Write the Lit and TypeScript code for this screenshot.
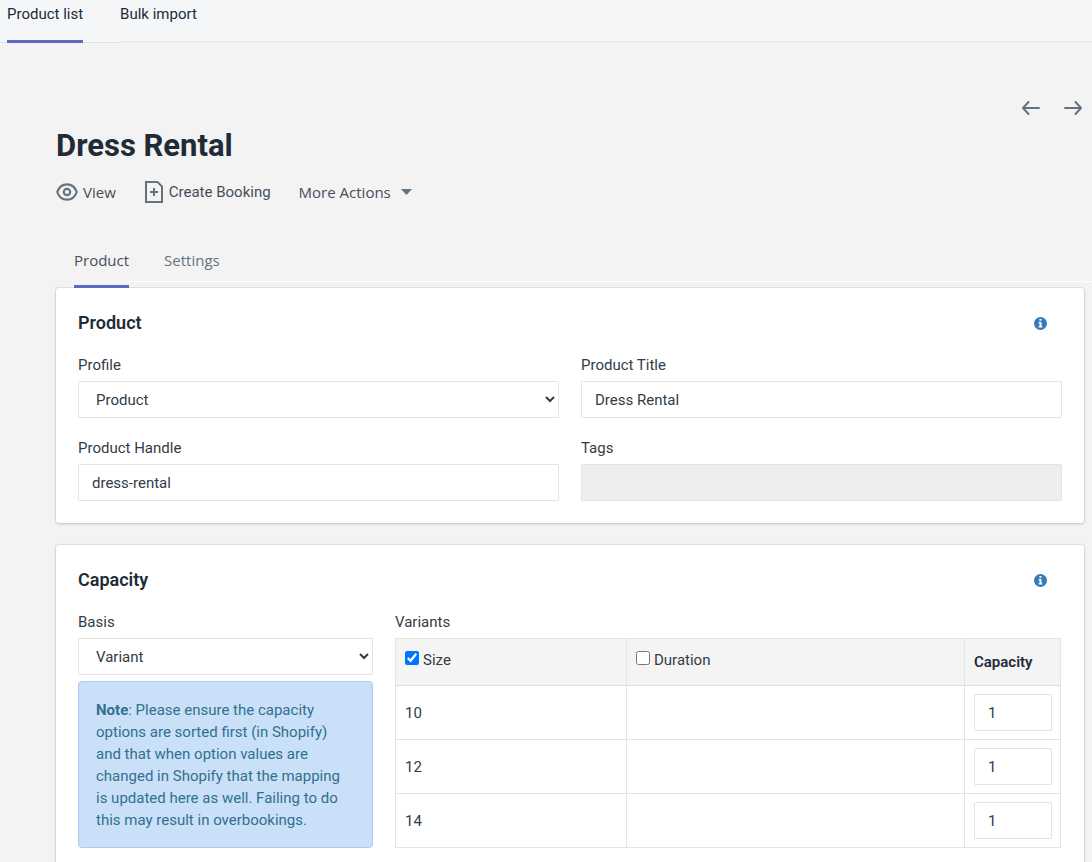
import { LitElement, html, css, svg } from "lit";
import { customElement, property, state } from "lit/decorators.js";

@customElement("info-link")
class InfoLink extends LitElement {
  @property() topic = "";

  static styles = css`
    :host { display: block; }
    .link { display: block; width: 13px; height: 13px; color: #337ab7; }
    .icon { display: block; width: 13px; height: 13px; }
  `;

  render() {
    return html`<a class="link" href="#help" aria-label="About ${this.topic}">
      <svg class="icon" viewBox="0 0 13 13" aria-hidden="true">
        <circle cx="6.5" cy="6.5" r="6.5" fill="currentColor" />
        <path fill="#fff" d="M5.4 2.1h2.1v1.7H5.4zM4.6 5h2.9v4.3h.9v1.3H4.6V9.3h.9V6.2h-.9z" />
      </svg>
    </a>`;
  }
}

@customElement("app-root")
class AppRoot extends LitElement {
  @state() private variants = [
    { size: "10", capacity: 1 },
    { size: "12", capacity: 1 },
    { size: "14", capacity: 1 },
  ];

  static styles = css`
    :host {
      display: block;
      min-height: 100vh;
      background: #f3f3f3;
      color: #212b36;
      font: 15px/22px Roboto, "Liberation Sans", sans-serif;
    }
    * { box-sizing: border-box; }
    a { color: inherit; text-decoration: none; }
    button { border: 0; background: none; padding: 0; color: inherit; font: inherit; }

    .topnav {
      display: flex;
      height: 42px;
      background: #f4f6f8;
      box-shadow: inset 0 -1px #dfe3e8;
    }
    .topnav a { display: block; height: 42px; padding-top: 3px; }
    .nav-current {
      height: 43px;
      padding: 0 37px 0 7px;
      background: #f4f6f8;
      box-shadow: inset 0 -1px #dfe3e8;
    }
    .topnav .active { height: 43px; }
    .active { border-bottom: 3px solid #5c6ac4; }

    .page { padding: 55px 8px 22px 56px; }
    .pager { display: flex; justify-content: flex-end; gap: 20px; }
    .pager svg, .pager button { display: block; width: 22px; height: 22px; }
    .title { margin: 9px 0 0; font-size: 31px; line-height: 36px; font-weight: 700; }

    .actions {
      display: flex;
      align-items: center;
      gap: 28px;
      margin-top: 16px;
      height: 24px;
      color: #454f5b;
    }
    .action { display: flex; align-items: center; gap: 5px; }
    .action svg { display: block; }
    .more { gap: 10px; }
    .alt { font-family: "Open Sans", "Noto Sans", sans-serif; }
    .pager, .action svg { color: #637381; }

    .tabs {
      display: flex;
      height: 39px;
      margin: 39px -8px 0 0;
      padding-left: 18px;
    }
    .tabs a { display: block; padding-top: 6px; color: #637381; }
    .tabs .active { position: relative; height: 45px; color: #454f5b; }
    .tabs-rest { flex: 1; padding-left: 35px; border-bottom: 1px solid #fff; }

    .card {
      margin-top: 22px;
      padding: 22px;
      border-radius: 3px;
      background: #fff;
      box-shadow: 0 0 0 1px rgba(63, 63, 68, 0.08), 0 1px 3px rgba(63, 63, 68, 0.2);
    }
    .tabs + .card { margin-top: 6px; }
    .card-head {
      display: flex;
      align-items: center;
      justify-content: space-between;
      padding-right: 15px;
      margin-bottom: 18px;
    }
    .card-head h2 { margin: 0; font-size: 18px; line-height: 26px; font-weight: 600; }

    .fields { display: grid; grid-template-columns: 1fr 1fr; gap: 19px 22px; }
    .capacity { display: grid; grid-template-columns: 295fr 667fr; gap: 22px; align-items: start; }
    .label { display: block; margin-bottom: 5px; color: #323c47; }
    .control {
      display: block;
      width: 100%;
      height: 37px;
      padding: 0 13px;
      border: 1px solid #e3e4e6;
      border-radius: 1px;
      background: #fff;
      color: #323c47;
      font: inherit;
    }
    .control:disabled { background: #eee; }
    select.control { padding: 0 2px 0 13px; }

    .note {
      margin: 6px 0 0;
      padding: 17px 22px 16px 17px;
      border: 1px solid #a4cdf4;
      border-radius: 4px;
      background: #c9e0f8;
      color: #31708f;
    }

    .variants { width: calc(100% - 1px); table-layout: fixed; border-collapse: collapse; color: #323c47; }
    .variants th, .variants td { border: 1px solid #e3e4e6; text-align: left; padding: 8px 8px 8px 9px; }
    .variants th {
      height: 47px;
      padding-top: 0;
      padding-bottom: 0;
      background: #f4f4f4;
      color: #212b36;
      font-weight: 600;
      border-bottom-color: #dcdcdc;
    }
    .variants .option { padding-top: 10px; vertical-align: top; font-weight: 400; color: #323c47; }
    .col-size { width: 231px; }
    .col-capacity { width: 96px; }
    .option label { display: flex; gap: 4px; }
    .option input { width: 14px; height: 14px; margin: 2px 0 0; }
  `;

  private arrow(label: string, d: string) {
    return html`<button type="button" aria-label=${label}>
      <svg viewBox="0 0 22 22" fill="none" stroke="currentColor" stroke-width="2" stroke-linecap="round" stroke-linejoin="round" aria-hidden="true">${svg`<path d=${d} />`}</svg>
    </button>`;
  }

  render() {
    return html`
      <nav class="topnav" aria-label="Main">
        <div class="nav-current"><a class="active" href="#products">Product list</a></div>
        <a href="#import">Bulk import</a>
      </nav>

      <main class="page">
        <div class="pager">
          ${this.arrow("Previous product", "M19 11H3M8.5 5L3 11l5.5 6")}
          ${this.arrow("Next product", "M3 11h16M13.5 5L19 11l-5.5 6")}
        </div>
        <h1 class="title">Dress Rental</h1>

        <div class="actions">
          <a class="action alt" href="#view">
            <svg width="22" height="18" viewBox="0 0 22 18" fill="none" stroke="currentColor" stroke-width="2.2" aria-hidden="true">
              <path d="M1.200 9C3 4 6.600 1.300 11 1.300S19 4 20.800 9c-1.800 5-5.400 7.700-9.800 7.700S3 14 1.200 9z" stroke-linejoin="round" />
              <circle cx="11" cy="9" r="3.200" />
            </svg>
            View
          </a>
          <button type="button" class="action">
            <svg width="20" height="22" viewBox="0 0 20 22" fill="none" stroke="currentColor" stroke-width="2" aria-hidden="true">
              <path d="M2 1h11.500L18 5.500V21H2zM10 7v8M6 11h8" />
            </svg>
            Create Booking
          </button>
          <button type="button" class="action more alt">
            More Actions
            <svg width="11" height="6" viewBox="0 0 11 6" aria-hidden="true"><path d="M0 0h11L5.500 6z" fill="currentColor" /></svg>
          </button>
        </div>

        <nav class="tabs alt" aria-label="Product sections">
          <a class="active" href="#product">Product</a>
          <div class="tabs-rest"><a href="#settings">Settings</a></div>
        </nav>

        <section class="card">
          <div class="card-head"><h2>Product</h2><info-link topic="Product"></info-link></div>
          <div class="fields">
            <div>
              <label class="label" for="profile">Profile</label>
              <select class="control" id="profile"><option>Product</option></select>
            </div>
            <div>
              <label class="label" for="title">Product Title</label>
              <input class="control" id="title" type="text" value="Dress Rental" />
            </div>
            <div>
              <label class="label" for="handle">Product Handle</label>
              <input class="control" id="handle" type="text" value="dress-rental" />
            </div>
            <div>
              <label class="label" for="tags">Tags</label>
              <input class="control" id="tags" type="text" disabled />
            </div>
          </div>
        </section>

        <section class="card">
          <div class="card-head"><h2>Capacity</h2><info-link topic="Capacity"></info-link></div>
          <div class="capacity">
            <div>
              <label class="label" for="basis">Basis</label>
              <select class="control" id="basis"><option>Variant</option></select>
              <p class="note"><b>Note</b>: Please ensure the capacity options are sorted first (in Shopify) and that when option values are changed in Shopify that the mapping is updated here as well. Failing to do this may result in overbookings.</p>
            </div>
            <div>
              <span class="label" id="variants-label">Variants</span>
              <table class="variants" aria-labelledby="variants-label">
                <colgroup><col class="col-size" /><col /><col class="col-capacity" /></colgroup>
                <thead>
                  <tr>
                    <th class="option"><label><input type="checkbox" checked />Size</label></th>
                    <th class="option"><label><input type="checkbox" />Duration</label></th>
                    <th>Capacity</th>
                  </tr>
                </thead>
                <tbody>
                  ${this.variants.map(
                    (v) => html`<tr>
                      <td>${v.size}</td>
                      <td></td>
                      <td><input class="control" type="text" inputmode="numeric" aria-label="Capacity for size ${v.size}" .value=${String(v.capacity)} /></td>
                    </tr>`
                  )}
                </tbody>
              </table>
            </div>
          </div>
        </section>
      </main>
    `;
  }
}
